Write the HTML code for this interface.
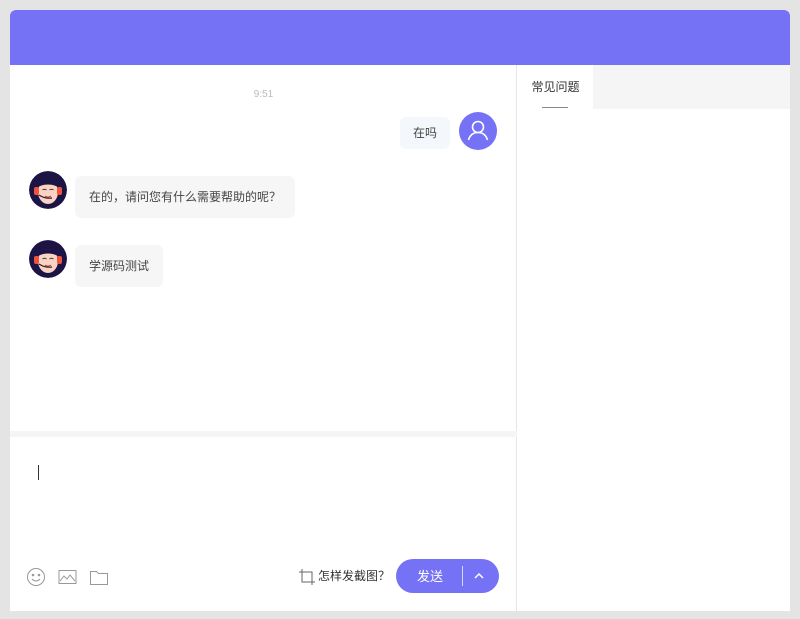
<!DOCTYPE html>
<html><head><meta charset="utf-8"><style>
*{margin:0;padding:0;box-sizing:border-box}
body{width:800px;height:619px;background:#e4e4e4;font-family:"Liberation Sans","Noto Sans CJK SC",sans-serif;position:relative;overflow:hidden}
.box{position:absolute;left:10px;top:10px;width:780px;height:601px;background:#fff;border-radius:6px 6px 0 0;overflow:hidden}
.hd{position:absolute;left:0;top:0;width:780px;height:55px;background:#7672f6}
.left{position:absolute;left:0;top:55px;width:507px;height:546px;border-right:1px solid #e6e6e6}
.right{position:absolute;left:508px;top:55px;width:272px;height:546px}
.tabs{height:44px;background:#f5f5f5;position:relative}
.tab{position:absolute;left:0;top:0;width:75px;height:44px;background:#fff;font-size:12px;color:#333;text-align:center;line-height:44px}
.tab:after{content:"";position:absolute;left:24px;top:42px;width:26px;height:1px;background:#888}
.time{position:absolute;top:24px;left:0;width:507px;text-align:center;font-size:10px;color:#bbb}
.bub{position:absolute;font-size:12px;color:#444;border-radius:6px;padding:0 14px;height:42px;line-height:42px;background:#f6f6f6;font-family:"Noto Sans CJK SC",sans-serif}
.av{position:absolute;width:38px;height:38px;border-radius:50%}
.band{position:absolute;left:0;top:366px;width:507px;height:6px;background:#f5f5f5}
.cur{position:absolute;left:28px;top:400px;width:1px;height:15px;background:#333}
.send{position:absolute;left:386px;top:494px;width:103px;height:34px;border-radius:17px;background:#7672f6;color:#fff;font-size:13px}
</style></head><body>
<div class="box">
<div class="hd"></div>
<div class="left">
<div class="time">9:51</div>
<div class="bub" style="left:390px;top:52px;background:#f4f8fc;height:32px;line-height:32px;padding:0 13px">在吗</div>
<div class="av" style="left:449px;top:47px;background:#7672f6">
<svg width="38" height="38" viewBox="0 0 38 38" fill="none" stroke="#fff" stroke-width="1.6"><circle cx="19" cy="15" r="5.5"/><path d="M9.5 28c1.5-5 5-7.5 9.5-7.5s8 2.5 9.5 7.5"/></svg></div>
<svg class="av" style="left:19px;top:106px" viewBox="0 0 38 38"><circle cx="19" cy="19" r="19" fill="#1d1446"/><ellipse cx="19" cy="21" rx="10" ry="12" fill="#fbd3c4"/><path d="M7 18c1-12 23-12 24 0c-5-6-19-6-24 0z" fill="#1d1446"/><rect x="5" y="16" width="5" height="8" rx="2" fill="#f0543c"/><rect x="28" y="16" width="5" height="8" rx="2" fill="#f0543c"/><path d="M10 24q6 4 13 3" stroke="#222" stroke-width="1.2" fill="none"/><path d="M13.5 19q2-1.5 4 0M20.5 19q2-1.5 4 0" stroke="#333" fill="none"/><path d="M16 25q3 2 6 0" stroke="#c33" fill="#fff"/></svg>
<div class="bub" style="left:65px;top:111px">在的，请问您有什么需要帮助的呢？</div>
<svg class="av" style="left:19px;top:175px" viewBox="0 0 38 38"><circle cx="19" cy="19" r="19" fill="#1d1446"/><ellipse cx="19" cy="21" rx="10" ry="12" fill="#fbd3c4"/><path d="M7 18c1-12 23-12 24 0c-5-6-19-6-24 0z" fill="#1d1446"/><rect x="5" y="16" width="5" height="8" rx="2" fill="#f0543c"/><rect x="28" y="16" width="5" height="8" rx="2" fill="#f0543c"/><path d="M10 24q6 4 13 3" stroke="#222" stroke-width="1.2" fill="none"/><path d="M13.5 19q2-1.5 4 0M20.5 19q2-1.5 4 0" stroke="#333" fill="none"/><path d="M16 25q3 2 6 0" stroke="#c33" fill="#fff"/></svg>
<div class="bub" style="left:65px;top:180px">学源码测试</div>
<div class="band"></div>
<div class="cur"></div>
<svg style="position:absolute;left:16px;top:502px" width="90" height="20" fill="none" stroke="#999" stroke-width="1"><circle cx="10" cy="10" r="8.5"/><circle cx="7" cy="8" r=".8" fill="#999"/><circle cx="13" cy="8" r=".8" fill="#999"/><path d="M6 12q4 4 8 0"/><rect x="33" y="3.5" width="17" height="13"/><path d="M34 14l4-5 3 3 3-4 5 6"/><path d="M64.5 4.5h6l2 2h9v11h-17z"/></svg>
<svg style="position:absolute;left:288px;top:503px" width="18" height="18" fill="none" stroke="#666"><path d="M4 1v13h13M1 4h13v13"/></svg>
<div style="position:absolute;left:308px;top:502px;font-size:12px;color:#333;font-family:'Noto Sans CJK SC',sans-serif">怎样发截图？</div>
<div class="send"><span style="position:absolute;left:21px;top:7px;font-family:'Noto Sans CJK SC',sans-serif">发送</span><span style="position:absolute;left:66px;top:7px;width:1px;height:20px;background:#fff;opacity:.7"></span><svg style="position:absolute;left:78px;top:12px" width="10" height="10" fill="none" stroke="#fff" stroke-width="1.5"><path d="M1 7l4-4 4 4"/></svg></div>
</div>
<div class="right"><div class="tabs"><div class="tab">常见问题</div></div></div>
</div>
</body></html>
